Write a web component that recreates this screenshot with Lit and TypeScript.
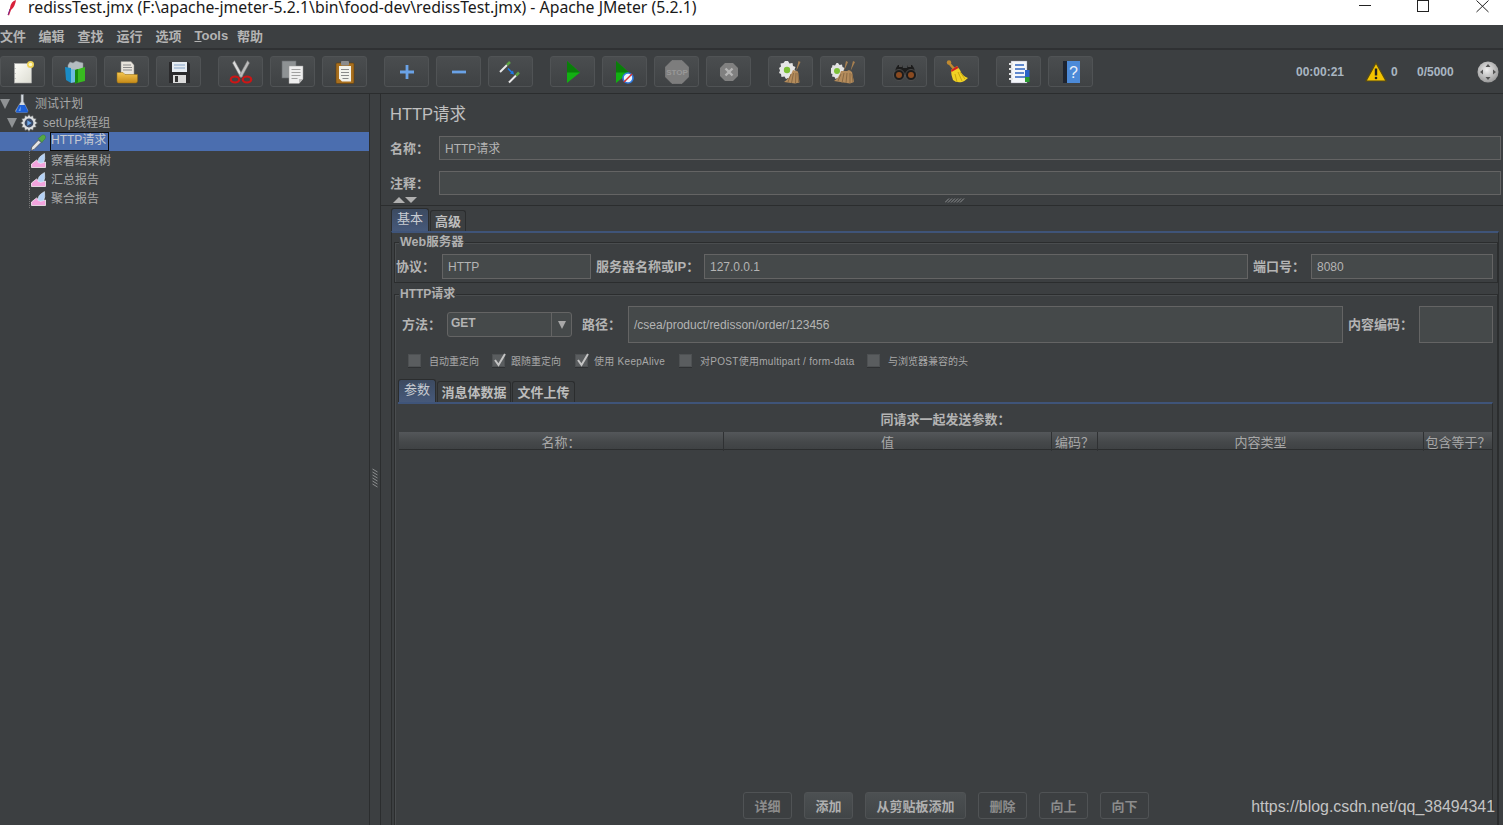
import { LitElement, html, css } from "lit";
import { customElement } from "lit/decorators.js";

const flask = html`<svg class="ti" width="14" height="19" viewBox="0 0 14 19"><path d="M6 .5h2.500v7l4.500 9q.3 2-1.500 2H2q-1.800 0-1.500-2L6 7.500z" fill="#d4d9df" stroke="#777c82" stroke-width=".6"/><path d="M4 11h6l3 6q.2 1.500-1 1.500H2q-1.200 0-1-1.500z" fill="#1d5fd6"/><path d="M6 12l-2.500 5h2z" fill="#6fa2f0"/></svg>`;
const gear = html`<svg class="ti" width="18" height="18" viewBox="0 0 18 18"><path d="M9 .3l1.500 2.200 2.500-1 .6 2.700 2.700.6-1 2.500 2.200 1.700-2.200 1.500 1 2.600-2.700.5-.6 2.700-2.500-1L9 17.700l-1.500-2.300-2.500 1-.6-2.700-2.700-.5 1-2.600L.5 9l2.200-1.700-1-2.500 2.700-.6L5 1.500l2.500 1z" fill="#dcdedf" stroke="#4e5153" stroke-width=".6"/><circle cx="9" cy="9" r="4.400" fill="#3b4a66"/><path d="M7.300 6.300l4.400 2.700-4.400 2.700z" fill="#6aa4e8"/></svg>`;
const dropper = html`<svg class="ti" width="17" height="18" viewBox="0 0 17 18"><path d="M1 17.500l.8-3.500L8.500 7l2.500 2.500L4 16.500z" fill="#e4e4e4" stroke="#4a4a4a" stroke-width=".7"/><path d="M8 5.500l4 4 1-1.500 2-2q1.500-2.200-.2-3.800-1.800-1.300-3.600.6L10 4z" fill="#55a844" stroke="#38702c" stroke-width=".4"/></svg>`;
const report = html`<svg class="ti" width="15" height="15" viewBox="0 0 15 15"><path d="M.5 14.500V11l5-4 3.500 3 5.500-1v5.500z" fill="#f2a4de" stroke="#fff" stroke-width=".7"/><path d="M7 9.500q-1-5 6.500-9 1 6-1 9-2.500 1.500-5.500 0z" fill="#b4d2f6" stroke="#e8f0fa" stroke-width=".5"/></svg>`;

const icons = {
  newDoc: html`<svg width="24" height="24" viewBox="0 0 24 24"><defs><linearGradient id="pg" x1="0" y1="0" x2="1" y2="1"><stop offset="0" stop-color="#fdfdf8"/><stop offset="1" stop-color="#dcdcd2"/></linearGradient></defs><rect x="3.500" y="3.500" width="17" height="19.500" fill="url(#pg)" stroke="#aaa" stroke-width=".6"/><path d="M4 8v1M4 13v1M4 18v1" stroke="#999"/><circle cx="19.500" cy="4.500" r="3.500" fill="#f0d458"/><circle cx="19.500" cy="4.500" r="1.800" fill="#fff8c4"/></svg>`,
  templates: html`<svg width="24" height="24" viewBox="0 0 24 24"><path d="M5 5l2-3 3 1 3-2 3 1 4 1v7H5z" fill="#b4bcc0" stroke="#8a9094" stroke-width=".5"/><path d="M2 7l6 1v15l-5-3z" fill="#1a8cc6"/><path d="M8 9l5 1v12l-5 1z" fill="#6cbce0"/><path d="M12 10l10-3v14l-10 2.500z" fill="#38ba20"/><path d="M12 10l3-1v13.500l-3 1z" fill="#178a0e"/></svg>`,
  open: html`<svg width="24" height="24" viewBox="0 0 24 24"><defs><linearGradient id="fo" x1="0" y1="0" x2="0" y2="1"><stop offset="0" stop-color="#f4c650"/><stop offset="1" stop-color="#c68a18"/></linearGradient></defs><path d="M6 1.500h10l3 3.500v10H6z" fill="#e8e4dc" stroke="#8c8c88" stroke-width=".5"/><path d="M8 5h8M8 7.500h9M8 10h9" stroke="#8a8a8a"/><path d="M2 12.500h6l2 2h12.500v6.500q0 2-2 2H3.500Q2 23 2 21z" fill="url(#fo)" stroke="#9a7012" stroke-width=".5"/></svg>`,
  save: html`<svg width="24" height="24" viewBox="0 0 24 24"><path d="M2 2h19l2 2v19H2z" fill="#2a2a2c"/><rect x="5" y="2" width="15" height="10" fill="#e6ecf2"/><path d="M7 5h11M7 8h11" stroke="#86a4c8"/><rect x="6" y="15" width="13" height="8" fill="#dadada"/><rect x="8" y="16" width="3" height="6" fill="#333"/></svg>`,
  cut: html`<svg width="24" height="24" viewBox="0 0 24 24"><path d="M5.500.5l8.500 15.500-2.500 1.500L3.500 3z" fill="#dcdcdc" stroke="#777" stroke-width=".5"/><path d="M18.500.5L10 16l2.500 1.500L20.500 3z" fill="#bcbcbc" stroke="#777" stroke-width=".5"/><ellipse cx="6" cy="19.500" rx="4.200" ry="3" fill="none" stroke="#cc1616" stroke-width="2.200"/><ellipse cx="18" cy="19.500" rx="4.200" ry="3" fill="none" stroke="#cc1616" stroke-width="2.200"/></svg>`,
  copy: html`<svg width="24" height="24" viewBox="0 0 24 24"><rect x="1" y="1" width="14" height="17" fill="#8e9294" stroke="#666a6d" stroke-width=".6"/><path d="M8 6h14v13l-4 4.500H8z" fill="#eeeeee" stroke="#999" stroke-width=".5"/><path d="M18 23.500V19h4z" fill="#bbb"/><path d="M10.500 9.500h9M10.500 12.500h9M10.500 15.500h9M10.500 18.500h6" stroke="#a0a0a0"/></svg>`,
  paste: html`<svg width="24" height="24" viewBox="0 0 24 24"><rect x="3" y="3" width="18" height="20.500" rx="1" fill="#a86f1e" stroke="#5e3e0e" stroke-width=".6"/><path d="M6 6h12v15.500H9l-3-3z" fill="#f2f2ec"/><path d="M8 9.500h8M8 12.500h8M8 15.500h8M9.500 18.500h6" stroke="#8a8a8a"/><rect x="8" y="1" width="8" height="4.500" rx="1" fill="#8b8b8b"/></svg>`,
  plus: html`<svg width="24" height="24" viewBox="0 0 24 24"><path d="M12 5v14M5 12h14" stroke="#6aa2e6" stroke-width="2.800"/></svg>`,
  minus: html`<svg width="24" height="24" viewBox="0 0 24 24"><path d="M5 12h14" stroke="#6aa2e6" stroke-width="2.800"/></svg>`,
  toggle: html`<svg width="24" height="24" viewBox="0 0 24 24"><path d="M1 12l7-7" stroke="#e8e8e8" stroke-width="2"/><path d="M8 5l3-3" stroke="#5ea445" stroke-width="2.500"/><path d="M10 22.500l7-7" stroke="#e8e8e8" stroke-width="2"/><path d="M17 15.500l3-3" stroke="#5ea445" stroke-width="2.500"/><path d="M9 8.500l4.500 4.500" stroke="#1f7ae8" stroke-width="1.600"/><path d="M15 14.500l-1-4-3 3z" fill="#1f7ae8"/></svg>`,
  play: html`<svg width="24" height="24" viewBox="0 0 24 24"><path d="M6 1l13 11.500L6 23z" fill="#12b012"/><path d="M6 1l13 11.500H6z" fill="#0a7d0a"/></svg>`,
  playNo: html`<svg width="24" height="24" viewBox="0 0 24 24"><path d="M3 1l13 11.500L3 23z" fill="#12b012"/><path d="M3 1l13 11.500H3z" fill="#0a7d0a"/><circle cx="15" cy="18" r="5" fill="#eef4fc" stroke="#2f7ae0" stroke-width="1.600"/><path d="M11 22l8-8" stroke="#d83030" stroke-width="1.500"/></svg>`,
  stop: html`<svg width="24" height="24" viewBox="0 0 24 24"><path d="M7 .5h10l6.500 6.500v10L17 23.500H7L.5 17V7z" fill="#7d7d7d" stroke="#8c8c8c" stroke-width=".5"/><text x="12" y="15" text-anchor="middle" class="stoptxt">STOP</text></svg>`,
  shut: html`<svg width="20" height="20" viewBox="0 0 20 20"><path d="M6 1h8l5 5v8l-5 5H6l-5-5V6z" fill="#808080"/><path d="M6.500 6.500l7 7M13.500 6.500l-7 7" stroke="#b4b4b4" stroke-width="2.400"/></svg>`,
  clear: html`<svg width="24" height="24" viewBox="0 0 24 24"><path d="M9 1l1.500 2.500 3-.5.500 3 2.500 1-1 2.500 1.500 2-2 1.500.5 3-3 .5-1 2.500-2.500-1L7 19l-1.500-2.500-3 .5-.5-3L0 13l1-2.500L0 8l2-1.500-.5-3 3-.5L6 1z" fill="#e6e6e6"/><circle cx="8" cy="10" r="3.200" fill="#7cc036"/><path d="M19.500 1l2 1-4.500 9.500z" fill="#a88050"/><path d="M14 10l5 1.500 1.500 11-4.500 1-11-1.500q6-4 9-12z" fill="#b48c5c"/><path d="M12 14l-3 8M14.500 13l-2 10M17 13l-.5 10M19 13l.5 9" stroke="#8a6a44"/></svg>`,
  clearAll: html`<svg width="24" height="24" viewBox="0 0 24 24"><path d="M7 3l1.500 2 2.500-.5.500 2.500 2 1-1 2.500 1 2-2 1.500.5 2.500-2.500.5-1 2-2-1-2 1-1-2-2.500-.5.500-2.500L-1 13l1-2-1-2.500 2-1 .5-2.500L4 5.500 5.500 3z" fill="#e2e2e2"/><circle cx="6" cy="11" r="3" fill="#7cc036"/><path d="M15 1l2 1-4 9zM22 1l2 1-4.500 9z" fill="#a88050"/><path d="M10 11l6 0 2-1 3 2 2 10-4 1.500-16-2.500q5-3 7-10z" fill="#b48c5c"/><path d="M10 14l-3 7M13 13l-2 10M16 13l-1 10M19 13l0 10M21 14l1 8" stroke="#8a6a44"/></svg>`,
  binoc: html`<svg width="24" height="24" viewBox="0 0 24 24"><path d="M3 8l2-3h4l1 3h4l1-3h4l2 3 2 7H1z" fill="#1c1c1c"/><path d="M6 6h3M15 6h3" stroke="#777"/><circle cx="6" cy="15" r="5.500" fill="#1c1c1c" stroke="#666" stroke-width=".6"/><circle cx="18" cy="15" r="5.500" fill="#1c1c1c" stroke="#666" stroke-width=".6"/><circle cx="6" cy="15" r="3" fill="#8a4a20"/><circle cx="18" cy="15" r="3" fill="#8a4a20"/></svg>`,
  broom: html`<svg width="24" height="24" viewBox="0 0 24 24"><circle cx="4" cy="2.500" r="2.200" fill="#c08a30"/><path d="M4 3l6 7" stroke="#c08a30" stroke-width="2.500"/><path d="M6 10l6-4 3 4q2 6 8 8-3 3-6 4-6 1-9-2-2-5-2-10z" fill="#f0d224"/><path d="M6 10l6-4 1.500 2-7 4z" fill="#d02020"/><path d="M10 14l2 8M13 12l4 9M15 12l5 7" stroke="#c8a810"/></svg>`,
  log: html`<svg width="24" height="24" viewBox="0 0 24 24"><rect x="4" y="1" width="16" height="22" fill="#f4f6fa" stroke="#889" stroke-width=".4"/><rect x="18" y="10" width="4.500" height="7" fill="#2a64c8"/><rect x="18" y="17" width="4.500" height="5" fill="#2a9a30"/><path d="M8 5h9M8 9h10M8 13h9M8 17h10" stroke="#2f64c0" stroke-width="1.300"/><path d="M2 4h4M2 9h4M2 14h4M2 19h4" stroke="#e4e4e4" stroke-width="2"/></svg>`,
  help: html`<svg width="24" height="24" viewBox="0 0 24 24"><rect x="4" y="1" width="17" height="22" fill="#4c8ad8"/><rect x="4" y="1" width="4" height="22" fill="#1e2430"/><text x="14.500" y="18" text-anchor="middle" class="helptxt">?</text></svg>`,
};

const groups = [
  [icons.newDoc, icons.templates, icons.open, icons.save],
  [icons.cut, icons.copy, icons.paste],
  [icons.plus, icons.minus, icons.toggle],
  [icons.play, icons.playNo, icons.stop, icons.shut],
  [icons.clear, icons.clearAll],
  [icons.binoc, icons.broom],
  [icons.log, icons.help],
];

const grip = html`<svg width="20" height="5" viewBox="0 0 20 5"><path d="M0 4.500L4 .5M3 4.500L7 .5M6 4.500L10 .5M9 4.500L13 .5M12 4.500L16 .5M15 4.500L19 .5" stroke="#8c8f91" stroke-width="1"/></svg>`;
const gripV = html`<svg width="6" height="20" viewBox="0 0 6 20"><path d="M.5 1l5 3M.5 4l5 3M.5 7l5 3M.5 10l5 3M.5 13l5 3M.5 16l5 3" stroke="#8c8f91" stroke-width="1"/></svg>`;
const check = html`<svg width="15" height="17" viewBox="0 0 15 17"><path d="M3 9l3.500 5L13 3" fill="none" stroke="#c4c4c4" stroke-width="2"/></svg>`;

@customElement("app-root")
export class AppRoot extends LitElement {
  static styles = css`
    :host { display: block; width: 1503px; height: 825px; overflow: hidden; position: relative;
      background: #3c3f41; color: #bbbbbb;
      font: 13px "Liberation Sans", "Noto Sans CJK SC", sans-serif; }
    * { box-sizing: border-box; }
    .titlebar { height: 25px; background: #fff; display: flex; color: #1a1a1a; }
    .feather { margin: 0 0 0 7px; flex: none; }
    .ttext { margin-left: 11px; font: 15.820px/15px "Noto Sans", "Open Sans", sans-serif; white-space: nowrap; width: 1331px; flex: none; }
    .wc { display: flex; flex: none; }
    .wc svg { display: block; }
    .wc .w2 { margin-left: 45px; }
    .wc .w3 { margin-left: 47px; }
    .menu { height: 25px; display: flex; align-items: center; border-bottom: 2px solid #2f3133; font-weight: 700; padding-bottom: 2px; }
    .menu span { color: #b4b4b4; flex: none; }
    .menu .m0 { width: 38.500px; } .menu .m2 { width: 39px; } .menu .m6 { width: 42.500px; }
    .tu { text-decoration: underline; }
    .toolbar { height: 44px; display: flex; align-items: flex-start; padding: 6px 0 0 0; border-bottom: 1px solid #2b2d2e; }
    .tgroup { display: flex; gap: 7px; margin-right: 17px; }
    .tb { width: 45px; height: 31px; border: 1px solid #505355; border-radius: 3px; background: linear-gradient(#4a4d4f, #3f4244); display: flex; align-items: center; justify-content: center; }
    .tb svg { overflow: hidden; }
    .stoptxt { font: 700 8px "Liberation Sans", sans-serif; fill: #989898; }
    .helptxt { font: 16px "Liberation Sans", sans-serif; fill: #e8eef8; }
    .status { display: flex; align-items: center; height: 31px; color: #a9b6c2; font-size: 12px; font-weight: 700; }
    .s-time { margin-left: 186px; width: 69px; }
    .s-warn { width: 26px; display: flex; }
    .s-zero { width: 26px; }
    .s-thr { width: 60px; }
    .main { display: flex; height: 731px; }
    .tree { width: 370px; border-right: 1px solid #2b2d2e; flex: none; font-size: 12px; }
    .row { height: 19px; display: flex; align-items: center; color: #a8a8a8; white-space: nowrap; }
    .row .t { margin-top: -2px; }
    .ti { flex: none; display: block; }
    .tri { width: 0; height: 0; border: 5.500px solid transparent; border-top: 10px solid #8f9294; border-bottom: 0; flex: none; }
    .r1 .tri { margin-right: 5px; } .r1 .ti { margin-right: 6px; }
    .r2 { padding-left: 7px; } .r2 .tri { margin-right: 3px; } .r2 .ti { margin-right: 5px; }
    .r3 { background: #4b6eaf; padding-left: 30px; width: 369px; color: #c6cad2; }
    .r3 .ti { margin-right: 3px; }
    .focus { border: 1px solid #0b0b0b; height: 19px; line-height: 15px; padding: 0; width: 59px; }
    .r4 { padding-left: 29px; }
    .r4 .dot { width: 1px; height: 19px; border-left: 1px dotted #777; margin-right: 1px; flex: none; }
    .r4 .ti { margin-right: 5px; }
    .split { width: 10px; flex: none; display: flex; align-items: center; justify-content: center; }
    .split svg { margin-top: 36px; }
    .right { flex: 1; border-left: 1px solid #2b2d2e; min-width: 0; display: flex; flex-direction: column; }
    .h1 { margin: 10px 0 0 9px; height: 21px; line-height: 21px; font-size: 16.500px; color: #c0c0c0; }
    .frow { display: flex; align-items: center; height: 24px; margin-left: 9px; margin-top: 11px; font-weight: 700; }
    .frow .lbl { width: 49px; flex: none; color: #b4b4b4; margin-top: -2px; }
    .inp { background: #45494a; border: 1px solid #646464; color: #b4b4b4; font-weight: 400; font-size: 12px; flex: none; display: flex; align-items: center; padding-left: 5px; white-space: nowrap; }
    .name { width: 1062px; height: 24px; padding-bottom: 1px; }
    .arrows { height: 11px; border-bottom: 1px solid #2b2d2e; display: flex; align-items: center; }
    .up, .dn { width: 0; height: 0; border: 6px solid transparent; flex: none; }
    .up { border-bottom: 6px solid #b0b0b0; border-top: 0; margin-left: 12px; }
    .dn { border-top: 6px solid #b0b0b0; border-bottom: 0; }
    .arrows svg { margin-left: 528px; flex: none; }
    .tabs { display: flex; height: 23px; margin: 2px 0 0 10px; align-items: flex-end; }
    .tab { height: 21px; padding: 0 0 2px; border: 1px solid #2b2d2e; border-bottom: 0; border-radius: 3px 3px 0 0; display: flex; align-items: center; justify-content: center; margin-left: 1px; background: #3c3f41; color: #bdbdbd; font-weight: 700; flex: none; white-space: nowrap; }
    .tab.on { background: linear-gradient(#3c4a60, #46597a); height: 23px; color: #c8ccd2; font-weight: 400; margin-left: 0; padding-bottom: 5px; }
    .t38 { width: 38px; } .t36 { width: 36px; } .t74 { width: 74px; } .t63 { width: 63px; }
    .panel { flex: 1; margin-left: 10px; width: 1108px; border-top: 2px solid #3f5479; border-left: 1px solid #2b2d2e; border-right: 1px solid #2b2d2e; padding-left: 2px; min-height: 0; }
    .fs { position: relative; width: 1104px; border: 1px solid #2b2d2e; box-shadow: inset 1px 1px 0 #4a4d4f; }
    .fs.one { margin-top: 9px; height: 41px; padding: 11px 0 0 1px; display: flex; }
    .fs.two { margin-top: 11px; height: 540px; padding: 11px 0 0 0; }
    .legend { position: absolute; top: -8px; left: 4px; height: 17px; line-height: 15px; background: #3c3f41; padding: 0 1px; font-weight: 700; font-size: 12.500px; color: #b0b0b0; }
    .legend.s { font-size: 12px; }
    .flbl { font-weight: 700; color: #b4b4b4; flex: none; line-height: 25px; white-space: nowrap; }
    .w46 { width: 46px; } .w108 { width: 108px; margin-left: 5px; } .w58 { width: 58px; margin-left: 5px; }
    .h25 { height: 25px; }
    .i149 { width: 149px; } .i544 { width: 544px; } .i182 { width: 182px; }
    .reqrow { display: flex; align-items: center; height: 37px; padding-left: 7px; }
    .w45 { width: 45px; } .w46b { width: 46px; margin-left: 10px; } .w71 { width: 71px; margin-left: 5px; }
    .combo { width: 125px; height: 25px; background: #45494a; border: 1px solid #646464; border-radius: 3px; display: flex; flex: none; color: #b4b4b4; font-size: 12px; font-weight: 700; }
    .combo .v { flex: 1; padding: 3px 0 0 3px; }
    .combo .b { width: 20px; border-left: 1px solid #646464; display: flex; align-items: center; justify-content: center; }
    .combo .b i { width: 0; height: 0; border: 4.500px solid transparent; border-top: 8px solid #a8a8a8; border-bottom: 0; }
    .i715 { width: 715px; height: 37px; } .i74 { width: 74px; height: 37px; }
    .cbs { display: flex; height: 18px; margin-top: 8px; padding-left: 13px; font-size: 10px; color: #a8a8a8; align-items: center; }
    .cb { display: flex; align-items: center; flex: none; white-space: nowrap; }
    .ls { letter-spacing: .28px; }
    .c84 { width: 84px; } .c83 { width: 83px; } .c104 { width: 104px; } .c188 { width: 188px; }
    .box { width: 13px; height: 13px; background: #5a5d5f; border: 1px solid #4e5153; box-shadow: 0 1px 0 #2f3133; margin-right: 8px; flex: none; position: relative; }
    .box.k { margin-right: 6px; }
    .box svg { position: absolute; left: -1px; top: -4px; }
    .tabs2 { display: flex; height: 23px; margin: 10px 0 0 3px; align-items: flex-end; }
    .inner { margin-left: 3px; padding-left: 1px; width: 1095px; border-top: 2px solid #3f5479; height: 408px; display: flex; flex-direction: column; border-right: 1px solid #2b2d2e; }
    .cap { height: 28px; display: flex; align-items: center; justify-content: center; font-weight: 700; color: #b4b4b4; flex: none; }
    .thead { height: 18px; display: grid; grid-template-columns: 325px 328px 46px 326px 1fr; background: linear-gradient(#54575a, #45484a 60%, #3f4244); border-bottom: 1px solid #2b2d2e; flex: none; }
    .thead span { display: flex; align-items: center; justify-content: center; border-right: 1px solid #2f3133; color: #a8a8a8; white-space: nowrap; }
    .thead span:last-child { border-right: 0; }
    .tbody { height: 342px; flex: none; }
    .btns { display: flex; gap: 12px; margin-left: 344px; flex: none; }
    .btn { height: 27px; width: 49px; border: 1px solid #505355; border-radius: 3px; display: flex; align-items: center; justify-content: center; font-weight: 700; color: #8c8c8c; flex: none; }
    .btn.en { background: linear-gradient(#4c5052, #414547); color: #b0b0b0; }
    .btn.wide { width: 101px; }
    .mark { position: absolute; right: 8px; bottom: 9px; font: 15.900px "Liberation Sans", sans-serif; color: #c4c4c4; white-space: nowrap; }
  `;

  render() {
    return html`
      <div class="titlebar">
        <svg class="feather" width="10" height="16" viewBox="0 0 10 16"><path d="M9 0Q4 1 3 8L1 15l1 .5L4 10q4-3 5-10z" fill="#d8203a"/><path d="M1 15l2-6" stroke="#7a2a8a"/></svg>
        <div class="ttext">redissTest.jmx (F:\\apache-jmeter-5.2.1\\bin\\food-dev\\redissTest.jmx) - Apache JMeter (5.2.1)</div>
        <div class="wc">
          <svg width="13" height="12" viewBox="0 0 13 12"><path d="M0 5.500h12" stroke="#222" stroke-width="1"/></svg>
          <svg class="w2" width="12" height="13" viewBox="0 0 12 13"><rect x=".5" y=".5" width="11" height="11" fill="none" stroke="#222"/></svg>
          <svg class="w3" width="13" height="13" viewBox="0 0 13 13"><path d="M.5 .5l12 11.500M12.500 .5L.5 12" stroke="#222" stroke-width="1"/></svg>
        </div>
      </div>
      <div class="menu">
        <span class="m0">文件</span><span class="m2">编辑</span><span class="m2">查找</span><span class="m2">运行</span><span class="m2">选项</span><span class="m6"><span class="tu">T</span>ools</span><span>帮助</span>
      </div>
      <div class="toolbar">
        ${groups.map((g) => html`<div class="tgroup">${g.map((i) => html`<div class="tb">${i}</div>`)}</div>`)}
        <div class="status">
          <span class="s-time">00:00:21</span>
          <span class="s-warn"><svg width="22" height="20" viewBox="0 0 22 20"><path d="M11 1l10 18H1z" fill="#f4c400" stroke="#5a4c10" stroke-width="1.200"/><path d="M11 6.500v7" stroke="#222" stroke-width="2.400"/><circle cx="11" cy="16" r="1.300" fill="#222"/></svg></span>
          <span class="s-zero">0</span>
          <span class="s-thr">0/5000</span>
          <svg width="22" height="22" viewBox="0 0 22 22"><defs><radialGradient id="gl" cx=".45" cy=".4" r=".7"><stop offset="0" stop-color="#f0f0f0"/><stop offset="1" stop-color="#8c8c8c"/></radialGradient></defs><circle cx="11" cy="11" r="10.500" fill="url(#gl)"/><path d="M11 3l2.500 3h-5zM11 19l2.500-3h-5zM3 11l3-2.500v5zM19 11l-3-2.500v5z" fill="#555"/></svg>
        </div>
      </div>
      <div class="main">
        <div class="tree">
          <div class="row r1"><i class="tri"></i>${flask}<span class="t">测试计划</span></div>
          <div class="row r2"><i class="tri"></i>${gear}<span class="t">setUp线程组</span></div>
          <div class="row r3">${dropper}<span class="focus">HTTP请求</span></div>
          <div class="row r4"><i class="dot"></i>${report}<span class="t">察看结果树</span></div>
          <div class="row r4"><i class="dot"></i>${report}<span class="t">汇总报告</span></div>
          <div class="row r4"><i class="dot"></i>${report}<span class="t">聚合报告</span></div>
        </div>
        <div class="split">${gripV}</div>
        <div class="right">
          <div class="h1">HTTP请求</div>
          <div class="frow"><span class="lbl">名称：</span><div class="inp name">HTTP请求</div></div>
          <div class="frow"><span class="lbl">注释：</span><div class="inp name"></div></div>
          <div class="arrows"><i class="up"></i><i class="dn"></i>${grip}</div>
          <div class="tabs"><div class="tab on t38">基本</div><div class="tab t36">高级</div></div>
          <div class="panel">
            <div class="fs one">
              <span class="legend">Web服务器</span>
              <span class="flbl w46">协议：</span><div class="inp i149 h25">HTTP</div>
              <span class="flbl w108">服务器名称或IP：</span><div class="inp i544 h25">127.0.0.1</div>
              <span class="flbl w58">端口号：</span><div class="inp i182 h25">8080</div>
            </div>
            <div class="fs two">
              <span class="legend s">HTTP请求</span>
              <div class="reqrow">
                <span class="flbl w45">方法：</span>
                <div class="combo"><span class="v">GET</span><span class="b"><i></i></span></div>
                <span class="flbl w46b">路径：</span><div class="inp i715">/csea/product/redisson/order/123456</div>
                <span class="flbl w71">内容编码：</span><div class="inp i74"></div>
              </div>
              <div class="cbs">
                <div class="cb c84"><i class="box"></i>自动重定向</div>
                <div class="cb c83"><i class="box k">${check}</i>跟随重定向</div>
                <div class="cb c104"><i class="box k">${check}</i><span class="ls">使用 KeepAlive</span></div>
                <div class="cb c188"><i class="box"></i><span class="ls">对POST使用multipart / form-data</span></div>
                <div class="cb"><i class="box"></i>与浏览器兼容的头</div>
              </div>
              <div class="tabs2"><div class="tab on t38">参数</div><div class="tab t74">消息体数据</div><div class="tab t63">文件上传</div></div>
              <div class="inner">
                <div class="cap">同请求一起发送参数：</div>
                <div class="thead"><span>名称：</span><span>值</span><span>编码？</span><span>内容类型</span><span>包含等于？</span></div>
                <div class="tbody"></div>
                <div class="btns">
                  <div class="btn">详细</div><div class="btn en">添加</div><div class="btn en wide">从剪贴板添加</div><div class="btn">删除</div><div class="btn">向上</div><div class="btn">向下</div>
                </div>
              </div>
            </div>
          </div>
        </div>
      </div>
      <div class="mark">https://blog.csdn.net/qq_38494341</div>
    `;
  }
}
